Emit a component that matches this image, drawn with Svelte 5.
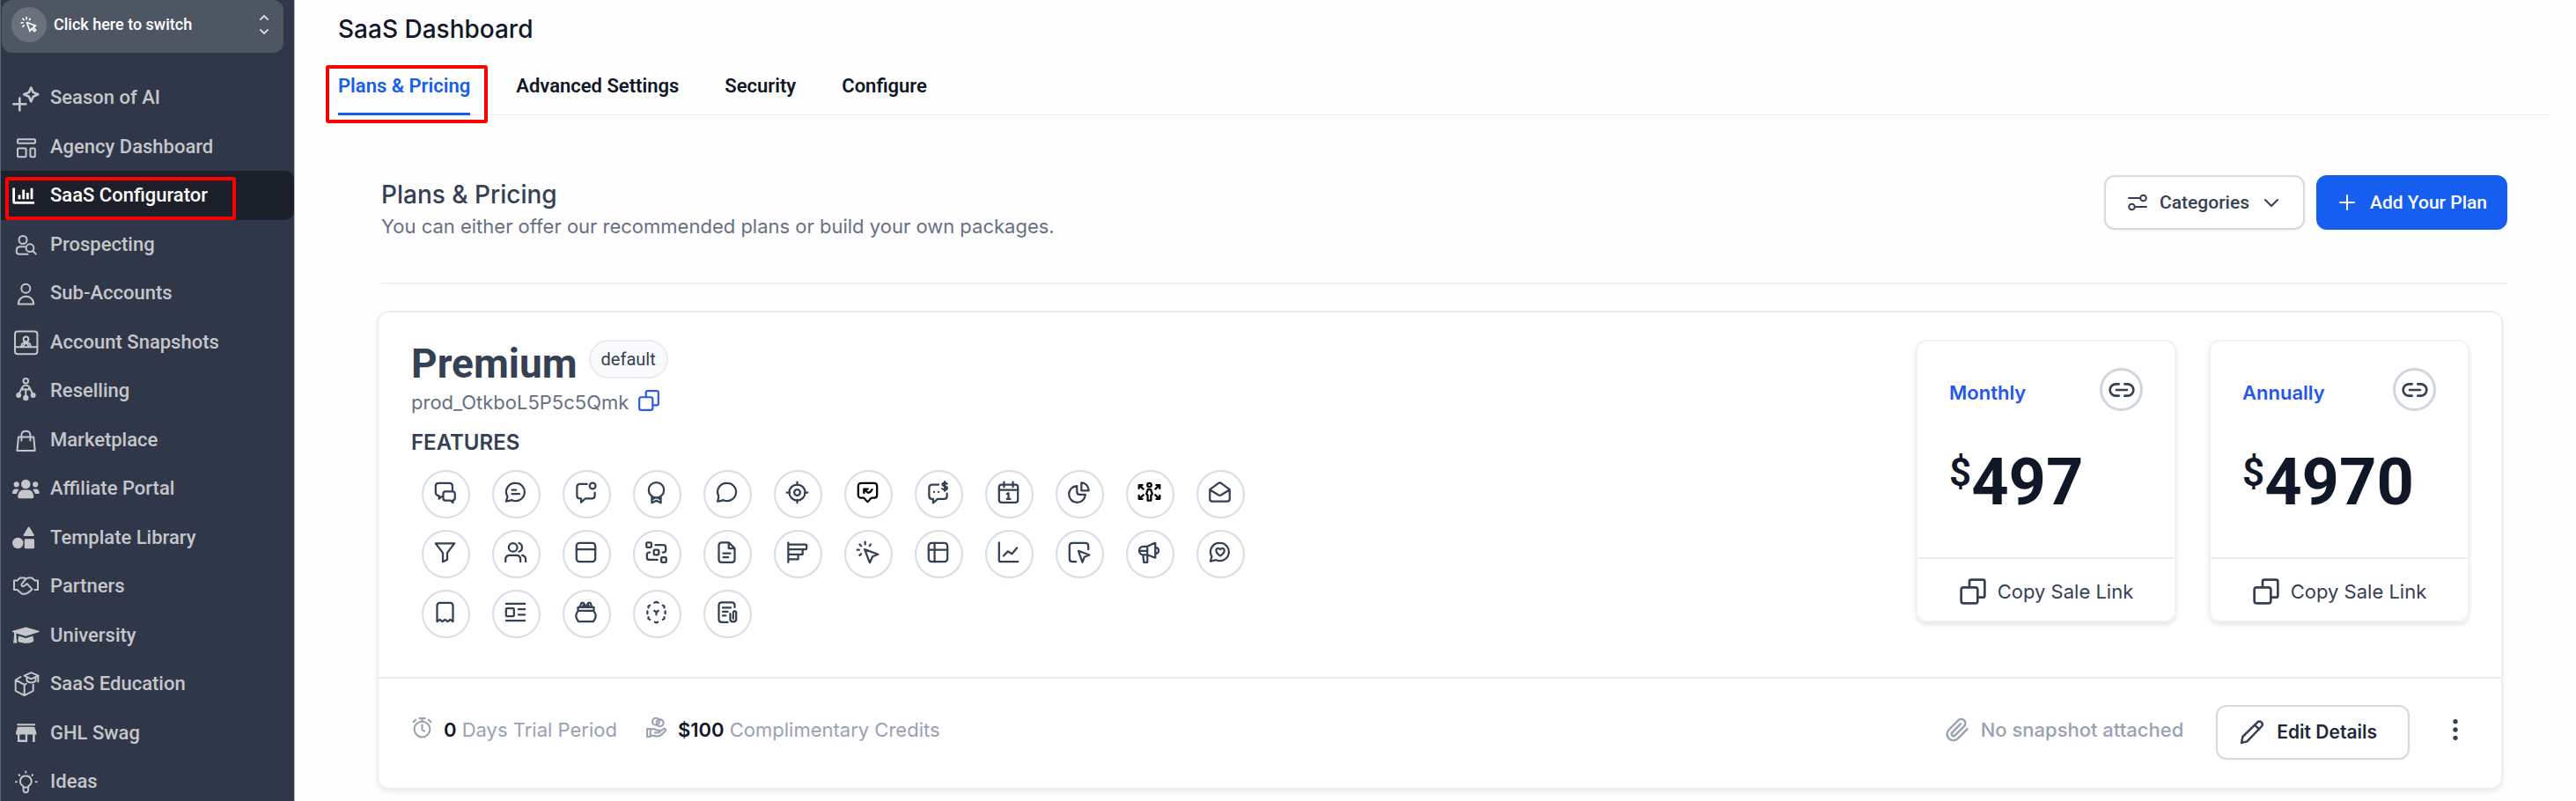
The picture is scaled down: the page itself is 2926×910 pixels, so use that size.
<script lang="ts">
    type NavItem = { label: string; icon: string; active?: boolean };

    const navItems: NavItem[] = [
        { label: 'Season of AI', icon: 'sparkle' },
        { label: 'Agency Dashboard', icon: 'dashboard' },
        { label: 'SaaS Configurator', icon: 'bars', active: true },
        { label: 'Prospecting', icon: 'prospect' },
        { label: 'Sub-Accounts', icon: 'person' },
        { label: 'Account Snapshots', icon: 'snapshot' },
        { label: 'Reselling', icon: 'resell' },
        { label: 'Marketplace', icon: 'bag' },
        { label: 'Affiliate Portal', icon: 'group' },
        { label: 'Template Library', icon: 'shapes' },
        { label: 'Partners', icon: 'handshake' },
        { label: 'University', icon: 'gradcap' },
        { label: 'SaaS Education', icon: 'boxcap' },
        { label: 'GHL Swag', icon: 'store' },
        { label: 'Ideas', icon: 'bulb' }
    ];

    // 32x32 drawings, "solid" marks the filled parts
    const navIcons: Record<string, string> = {
        sparkle: '<path stroke-width="2.6" d="M22.3 4.5l2.4 5.4 5.6 2.4-5.6 2.4-2.4 5.6-2.4-5.6-5.6-2.4 5.6-2.4zM9.3 16.5v14M2.3 23.3h14"/>',
        dashboard: '<rect x="7" y="7.2" width="20" height="4.6" rx="1"/><rect x="7" y="17.5" width="9.6" height="9.8" rx="1"/><rect x="21.4" y="17.5" width="5.4" height="9.8" rx="1"/>',
        bars: '<path stroke-width="2.8" d="M2.6 7.5v16q0 .9.9.9H26M9 15.5v4.7M13.7 9.5v10.7M18.3 13v7.2M23 7.8v12.4" stroke-linecap="butt"/>',
        prospect: '<circle cx="13" cy="10.5" r="4.5"/><path d="M15 18.3H9.5c-2.6.3-4 2.6-3.8 5.2 0 2.2 1 3.2 3.2 3.2h9.6M24.2 23l3.6 3.6"/><circle cx="21" cy="19.7" r="4.4"/>',
        person: '<circle cx="16.3" cy="10.8" r="5"/><path d="M7.8 28.6c0-11.8 17.4-11.8 17.4 0z"/>',
        snapshot: '<rect x="4" y="3.6" width="25.4" height="25.6" rx="3"/><circle cx="16.5" cy="12.4" r="2.8"/><path d="M4 21.2h25.4M11 21c.2-7 10.8-7 11 0M13.5 20l2-3h2l2 3"/>',
        resell: '<circle cx="16.3" cy="4.7" r="2.8"/><path d="M12.5 11.5c2-2.5 5.6-2.5 7.6 0v3h-7.6zM16.3 14v8M12 12.5l-3.5 7M20.6 12.5l3.5 7"/><g class="solid"><circle cx="8.2" cy="21" r="3"/><circle cx="16.3" cy="24" r="3.2"/><circle cx="24.6" cy="21" r="3"/></g>',
        bag: '<path d="M8 12.4h17.2l1.5 15.6H6.5zM11.4 16.5v-6.5c.4-5.6 9.6-5.6 10 0v6.5"/>',
        group: '<g class="solid"><circle cx="16.3" cy="11" r="5.3"/><circle cx="5.7" cy="11.3" r="3.1"/><circle cx="27.2" cy="11.3" r="3.1"/><path d="M7.3 25.5c0-5 2.7-8 6.5-8h5c3.8 0 6.5 3 6.5 8 0 1-.6 1.7-1.6 1.7H8.9c-1 0-1.6-.7-1.6-1.7zM1 20.6c0-2.6 1.5-4.2 4-4.2 1.8 0 3 .5 3.7 1.2-1.5 1.2-2.4 2.6-2.8 4.5H2c-.7 0-1-.5-1-1.5zM31.7 20.6c0-2.6-1.5-4.2-4-4.2-1.8 0-3 .5-3.7 1.2 1.5 1.2 2.4 2.6 2.8 4.5h3.9c.7 0 1-.5 1-1.5z"/></g>',
        shapes: '<g class="solid"><path d="M19.7 3.6c.5 0 .8.3 1 .6l5 8.3c.4.7 0 1.4-.8 1.4H14.5c-.8 0-1.2-.7-.8-1.4l5-8.3c.2-.3.5-.6 1-.6z"/><circle cx="7.3" cy="22" r="6.2"/><rect x="14.8" y="17.2" width="11.2" height="11" rx="1.2"/></g>',
        handshake: '<path d="M3 9.5h3.5l3.3-3h5.5l1.7 1 1.7-1h4.5l3.4 3H30v10.5h-3.5M3 9.5V20h3.5l5.5 4.7h3.5l2.5-.8 2-1.5 2-1.5 1.5-1.5-5.8-6.3-3.3 2.6c-2 1.2-3.7-.7-2.6-2.4l4.7-5.8"/>',
        gradcap: '<g class="solid"><path d="M16.3 6.6l15 4.2c.6.2.6 1 0 1.2l-15 4.8-10.8-3.4v3.6c.6.6.7 1.3.1 1.9l.9 5.6H2l.9-5.6c-.6-.6-.5-1.3.1-1.9v-4.4l-1.7-.6c-.6-.2-.6-1 0-1.2z"/><path d="M8.2 16.5l8.1 2.6 8.1-2.6.9 5.4c-2 3.7-16 3.7-18 0z"/></g>',
        boxcap: '<path d="M10.5 8L4.7 11.5v12.3l10 5.3 10-5.3v-7M4.7 11.5l10 5.3v12.3M14.7 16.8l2-1"/><path d="M14.5 6.7l8-3.5 8 3.5-8 3.6zM17.5 8.5v4.3c2.5 2.3 7.5 2.3 10 0V8.5M30.3 7v6.5"/>',
        store: '<g class="solid"><path d="M6.3 5.2h20.6v2H6.3zM7 8.8h19l2.3 6.5v2.2h-1.6v8.4h-2.6v-8.4h-6v8.4H7v-8.4H5v-2.2zM9.3 17.5v5.9h6.5v-5.9z" fill-rule="evenodd"/></g>',
        bulb: '<path d="M13.3 22.5v-1.4c-6-3.4-3.5-11.6 3-11.6s9 8.2 3 11.6v1.4zM13.6 24v2.4l1.3 1.9h2.8l1.3-1.9V24M16.3 4.6v1M6 16.2H5M27.7 16.2h1M8.5 8.3l.7.7M24.2 8.3l-.7.7"/>'
    };

    // feature icons in display order, 24x24 strokes
    const features: { name: string; body: string; dark?: boolean }[] = [
        { name: 'Two-way conversations', body: '<path d="M10 16H8.5L6 18.5V15.5C3.5 15 2.5 14 2.5 12V5.5c0-2 1-3 3-3h11c2 0 3 1 3 3V10M12.5 11h7c1.5 0 2.5.8 2.5 2.3v4.2c0 1.5-.8 2.2-2 2.3V22.3L17.7 20h-5.2c-1.5 0-2.3-.8-2.3-2.3v-4.4c0-1.5.8-2.3 2.3-2.3z"/>' },
        { name: 'Text messages', body: '<path d="M12.3 2.5a9 9 0 1 1-3.8 17.2L2.5 21l1.5-4.8A9 9 0 0 1 12.3 2.5zM8.5 9.5h4M8.5 13.5h7.5"/>' },
        { name: 'Missed call text back', body: '<path d="M13 3.5H6c-2 0-3 1-3 3v8.5c0 2 1 3 3 3h1.2v4l4.3-4H18c2 0 3-1 3-3v-3"/><circle cx="18.8" cy="5.3" r="3"/>' },
        { name: 'Reputation', body: '<circle cx="12" cy="9.5" r="7.7"/><path d="M7.5 16v6.5l4.5-2.3 4.5 2.3V16M7.5 19l3-1.5M16.5 19l-3-1.5"/>' },
        { name: 'Web chat', body: '<path d="M12.5 2.5a9 9 0 1 1-3.8 17.2c-2 .7-4 1.2-6 1.3.8-2 1.3-3.7 1-5.5A9 9 0 0 1 12.5 2.5z"/>' },
        { name: 'Ads', body: '<circle cx="12" cy="12" r="8"/><circle cx="12" cy="12" r="3"/><path d="M12 1.5v3M12 19.5v3M1.5 12h3M19.5 12h3"/>' },
        { name: 'Chat insights', dark: true, body: '<path d="M5.5 2.5h13c1.8 0 3 1.2 3 3v9c0 1.8-1.2 3-3 3h-2.5c-1 0-1.5 2-4 4-2.5-2-3-4-4-4H5.5c-1.8 0-3-1.2-3-3v-9c0-1.8 1.2-3 3-3z"/><path d="M8.3 12.5V8.5h4M8.3 8.5l3.7 3.5c1.5.8 3.5-1 4.5-3"/>' },
        { name: 'Text to pay', body: '<path d="M12.5 4H6C4 4 3 5 3 7v8.5c0 2 1 3 3 3h1v4l4.5-4H18c2 0 3-1 3-3V13M8 11.5v.1M12.5 11.5v.1M21 3.2c-2-1.5-4.8-.8-4.6 1 .2 2 4.8 1 4.8 3.3 0 2-3.2 2.3-5 .7M18.8 1v9.5"/>' },
        { name: 'Calendar', body: '<rect x="2.5" y="4" width="19" height="18" rx="2.5"/><path d="M2.5 9.5h19M7.5 1.5v5M16.5 1.5v5M10.5 13.5l1.5-.8V18.5M10.3 18.5h3.5"/>' },
        { name: 'Opportunities', body: '<path d="M10 5.5a8.3 8.3 0 1 0 8.5 8.5H13c-2 0-3-1-3-3zM14.5 2c4 .2 7.3 3.5 7.5 8h-7.5z"/>' },
        { name: 'Social planner', dark: true, body: '<circle cx="12" cy="4.5" r="2"/><path d="M10.5 9h3l1.5 4.5-1.3 1.3V20h-3.4v-5.2L9 13.5zM1.5 8V4.5H5M1.8 4.8L6 8.5M22.5 8V4.5H19M22.2 4.8L18 8.5M1.5 15v3.5H5M1.8 18.2L6 14.5M22.5 15v3.5H19M22.2 18.2L18 14.5"/>' },
        { name: 'Email', body: '<path d="M2 9l8.5-6.3c1-.7 2-.7 3 0L22 9v9.5c0 1.8-.8 2.5-2.5 2.5h-15C2.8 21 2 20.3 2 18.5zM2.5 9.5l8 5c1 .7 2 .7 3 0l8-5"/>' },
        { name: 'Funnels', body: '<path d="M2.5 3h19l-7.3 9.5v6.8L9.8 21.5v-9z"/>' },
        { name: 'Memberships', body: '<circle cx="9.5" cy="7" r="4.3"/><path d="M2 21.5v-2.3c0-2.6 1.7-4.2 4.2-4.2h6.6c2.5 0 4.2 1.6 4.2 4.2v2.3M15.5 2.7c4.2 1.3 4.2 7.3 0 8.6M18.8 15c2.2.5 3.5 2 3.5 4.2v2.3"/>' },
        { name: 'Websites', body: '<rect x="2.5" y="2.5" width="19" height="19" rx="3"/><path d="M2.5 9h19"/>' },
        { name: 'Workflows', body: '<rect x="2" y="2" width="5" height="5" rx="1"/><rect x="9.5" y="9.5" width="5" height="5" rx="1"/><rect x="17" y="17" width="5" height="5" rx="1"/><path d="M11 4.5h8c1.5 0 2.5 1 2.5 2.5v2.5c0 1.5-.8 2.3-2 2.5h-1M5.5 12H4.5c-1.3.2-2 1-2 2.5V17c0 1.5 1 2.5 2.5 2.5h8"/>' },
        { name: 'Forms', body: '<path d="M14 2H7C5 2 4 3 4 5v14c0 2 1 3 3 3h10c2 0 3-1 3-3V8zM14 2v6h6M8.5 13h7M8.5 17h5"/>' },
        { name: 'Surveys', body: '<path d="M3 2v20M3 4h17.5c.7 0 1 .3 1 1v3c0 .7-.3 1-1 1H3M17.5 9v5H3M13 14v5H3"/>' },
        { name: 'Trigger links', body: '<path d="M9 9l13.5 5-5.5 2.2-2.8 6.3zM9.5 1.5v2.5M4 4l1.5 1.5M1.5 9.5h2M4 15l1.5-1.5M15 4l-1 1.5"/>' },
        { name: 'Tables', body: '<rect x="2.5" y="2.5" width="19" height="19" rx="3"/><path d="M2.5 9.5h19M8.5 2.5v19"/>' },
        { name: 'Reporting', body: '<path d="M2.5 2v18.5c0 .7.3 1 1 1H21.5M7 15.5l4.5-4.5 4 2.5 5-6"/>' },
        { name: 'Ad manager', body: '<path d="M21.5 9V5.5c0-2-1-3-3-3h-13c-2 0-3 1-3 3v13c0 2 1 3 3 3H9M11.5 10.5l11 4.2-5 2-2 5.3z"/>' },
        { name: 'Campaigns', body: '<path d="M10 6l7.5-3.5h.5v15L10 14.5H6a4 4 0 0 1 0-8.5zM10 6v8.5M2.5 10.5h7M5.5 14.5l1 7.5h3.5v-7.5M18 7c4.5.5 4.5 6 0 6.5"/>' },
        { name: 'GMB messaging', body: '<path d="M12.3 2.5a9 9 0 1 1-3.8 17.2L2.5 21l1.5-4.8A9 9 0 0 1 12.3 2.5zM12.5 15.5c-6-3.8-4.5-8.3-1.5-7.5l1.5 1 1.5-1c3-.8 4.5 3.7-1.5 7.5z"/>' },
        { name: 'Invoices', body: '<path d="M4 21.5V5.5c0-2 1-3 3-3h10c2 0 3 1 3 3v16l-2.7-2-2.6 2-2.7-2-2.7 2-2.6-2z"/>' },
        { name: 'Blogs', body: '<path d="M2.5 3.5h19M15 9h6.5M15 14.5h6.5M2.5 20.5h19"/><rect x="2.5" y="8" width="8" height="8" rx="1"/>' },
        { name: 'Gift cards', body: '<path d="M4.5 10.5h15c1.5 1.5 2.5 3 2.5 5 0 2.5-1 4-2.5 6h-15C3 19.5 2 18 2 15.5c0-2 1-3.5 2.5-5zM4 10V7h16v3M6 6.5l1.5-4h2L12 6.5l2.5-4h2L18 6.5M9 6l1-2M15 6l-1-2"/>' },
        { name: 'Products', body: '<path d="M10 2.5l2-.8 2 .8M4 7.5V6l1.5-1M20 7.5V6l-1.5-1M3 11v2.5M21 11v2.5M4 17v1.5l1.5 1M20 17v1.5l-1.5 1M10.5 22l1.5.6 1.5-.6M12 14.5V12M10 10.5l2 1.5 2-1.5"/>' },
        { name: 'Documents', body: '<path d="M20 7V5c0-2-1-3-3-3H7C5 2 4 3 4 5v14c0 2 1 3 3 3h6M8 7.5h8M8 11.5h5M8 15.5h3M18.5 14v4.5M15.5 13.5V19c0 3.5 6 3.5 6 0v-6.5c0-2-3-2-3 0"/>' }
    ];

    const tabs = ['Plans & Pricing', 'Advanced Settings', 'Security', 'Configure'];
    let activeTab = $state('Plans & Pricing');

    const prices = [
        { period: 'Monthly', amount: 497 },
        { period: 'Annually', amount: 4970 }
    ];
</script>

{#snippet copyIcon(cls: string)}
    <svg class="line {cls}" viewBox="0 0 24 24" aria-hidden="true">
        <path d="M9 8V3.5c0-1 .5-1.500 1.500-1.500h10c1 0 1.500.5 1.500 1.500v12c0 1-.5 1.500-1.500 1.500H17" />
        <rect x="2" y="8.500" width="14" height="13.500" rx="2" />
    </svg>
{/snippet}

<div class="app">
    <aside>
        <button class="switcher">
            <span class="avatar">
                <svg class="line" viewBox="0 0 24 24" aria-hidden="true">
                    <path d="M9 9l12 4.5-3.500 2 3.800 4-1.800 1.800-3.800-4-2.500 3.700zM8.500 2v2.500M3.500 4l1.500 1.500M1.500 9.500h2M3.500 14.500l1.500-1.500M13.500 4l-1 1.500" />
                </svg>
            </span>
            <span class="switch-label">Click here to switch</span>
            <svg class="line updown" viewBox="0 0 12 24" aria-hidden="true">
                <path d="M2 6l4-4 4 4M2 18l4 4 4-4" />
            </svg>
        </button>

        <nav aria-label="Agency">
            <ul>
                {#each navItems as item}
                    <li>
                        <a href="#{item.icon}" class:active={item.active}>
                            <svg class="line" viewBox="0 0 32 32" aria-hidden="true">{@html navIcons[item.icon]}</svg>
                            {item.label}
                        </a>
                        {#if item.active}<span class="marker"></span>{/if}
                    </li>
                {/each}
            </ul>
        </nav>
    </aside>

    <main>
        <h1>SaaS Dashboard</h1>
        <div class="tabs" role="tablist">
            {#each tabs as tab, i}
                <div class="tab">
                    <button role="tab" aria-selected={tab === activeTab} onclick={() => (activeTab = tab)}>{tab}</button>
                    {#if i === 0}<span class="marker"></span>{/if}
                </div>
            {/each}
        </div>

        <header>
            <div>
                <h2>Plans &amp; Pricing</h2>
                <p>You can either offer our recommended plans or build your own packages.</p>
            </div>
            <div class="actions">
                <button class="btn">
                    <svg class="line" viewBox="0 0 24 24" aria-hidden="true">
                        <path d="M2 7h13M9 17h13" />
                        <circle cx="18.5" cy="7" r="3.3" />
                        <circle cx="5.5" cy="17" r="3.3" />
                    </svg>
                    Categories
                    <svg class="line" viewBox="0 0 24 24" aria-hidden="true"><path d="M5 9l7 7 7-7" /></svg>
                </button>
                <button class="btn primary">
                    <svg class="line" viewBox="0 0 24 24" aria-hidden="true"><path d="M12 4v16M4 12h16" /></svg>
                    Add Your Plan
                </button>
            </div>
        </header>

        <section class="plan">
            <div class="plan-body">
                <div class="info">
                    <div class="name">
                        <h3>Premium</h3>
                        <span class="pill">default</span>
                    </div>
                    <div class="product">
                        <span>prod_OtkboL5P5c5Qmk</span>
                        <button class="plain" aria-label="Copy product id">{@render copyIcon('blue')}</button>
                    </div>
                    <h4>FEATURES</h4>
                    <ul class="features">
                        {#each features as feature}
                            <li class:dark={feature.dark} title={feature.name}>
                                <svg class="line" viewBox="0 0 24 24" aria-hidden="true">{@html feature.body}</svg>
                            </li>
                        {/each}
                    </ul>
                </div>

                <div class="prices">
                    {#each prices as price}
                        <div class="price">
                            <div class="price-head">
                                <span>{price.period}</span>
                                <button class="link" aria-label="{price.period} link">
                                    <svg class="line" viewBox="0 0 24 24" aria-hidden="true">
                                        <path d="M9.5 7H7a5 5 0 0 0 0 10h2.5M14.5 7H17a5 5 0 0 1 0 10h-2.5M7.5 12h9" />
                                    </svg>
                                </button>
                            </div>
                            <div class="amount"><span class="currency">$</span>{price.amount}</div>
                            <button class="sale">{@render copyIcon('')}Copy Sale Link</button>
                        </div>
                    {/each}
                </div>
            </div>

            <footer>
                <div class="meta">
                    <svg class="line" viewBox="0 0 24 24" aria-hidden="true">
                        <circle cx="12" cy="14" r="8.5" />
                        <path d="M12 9v5.5l2.5 1.5M12 5V2M9 2h6M2.5 6l2.5-2.5M21.5 6L19 3.5" />
                    </svg>
                    <span><b>0</b> Days Trial Period</span>
                </div>
                <div class="meta">
                    <svg class="line" viewBox="0 0 24 24" aria-hidden="true">
                        <circle cx="11.5" cy="5.5" r="3.8" />
                        <circle cx="16" cy="7" r="3.8" />
                        <path d="M2 13.5h3.5v8.5H2zM5.5 14.5c3-1.5 5-1 6.5.5h2.5c1.8 0 1.8 2.7 0 2.7H10.5M15.5 16.5l4.5-3c1.7-.8 3 1 1.7 2.3L17 20.3c-1.3 1-3 1.4-5 1.2l-6.500-1" />
                    </svg>
                    <span><b>$100</b> Complimentary Credits</span>
                </div>
                <div class="meta snapshot">
                    <svg class="line" viewBox="0 0 24 24" aria-hidden="true">
                        <path d="M21.2 10.9l-9 9a5.8 5.8 0 0 1-8.3-8.3l9-9a3.9 3.9 0 0 1 5.5 5.5l-8.7 8.7a1.900 1.900 0 0 1-2.700-2.700l7.900-8" />
                    </svg>
                    <span>No snapshot attached</span>
                </div>
                <button class="btn edit">
                    <svg class="line" viewBox="0 0 24 24" aria-hidden="true">
                        <path d="M2.5 21.5l1-5.5L17.3 2.5c2.3-1.6 5.3 1.3 3.7 3.7L7.5 20.3zM14.5 5.3l4 4" />
                    </svg>
                    Edit Details
                </button>
                <button class="plain more" aria-label="More actions">
                    <svg viewBox="0 0 24 24" aria-hidden="true">
                        <circle cx="12" cy="4" r="2.3" />
                        <circle cx="12" cy="12" r="2.3" />
                        <circle cx="12" cy="20" r="2.3" />
                    </svg>
                </button>
            </footer>
        </section>
    </main>
</div>

<style>
    :global(body) {
        background: #fefefe;
    }

    .app {
        display: flex;
        height: 100vh;
        overflow: hidden;
        font-family: Inter, sans-serif;
        font-size: 22px;
        line-height: 28px;
        color: #344054;
    }

    button {
        font: inherit;
        color: inherit;
        background: none;
        border: 0;
        padding: 0;
        cursor: pointer;
    }

    ul {
        list-style: none;
        margin: 0;
        padding: 0;
    }

    h1,
    h2,
    h3,
    h4,
    p {
        margin: 0;
    }

    .line {
        fill: none;
        stroke: currentColor;
        stroke-width: 2;
        stroke-linecap: round;
        stroke-linejoin: round;
        flex: none;
    }

    .line :global(.solid) {
        fill: currentColor;
        stroke: none;
    }

    .marker {
        position: absolute;
        box-sizing: border-box;
        border: 4px solid #ff0000;
        border-radius: 3px;
        pointer-events: none;
    }

    /* sidebar */
    aside {
        box-sizing: border-box;
        width: 335px;
        flex: none;
        background: #2f3748;
        border-left: 1px solid #5b6472;
        border-right: 1px solid #b9bdc5;
        font-family: Roboto, sans-serif;
        color: #c5c6ca;
    }

    .switcher {
        display: flex;
        align-items: center;
        gap: 8px;
        width: 320px;
        height: 60px;
        margin: 0 0 23px 1px;
        padding: 0 16px 4px 11px;
        border-radius: 12px;
        background: #4e5664;
        color: #ffffff;
        font-size: 18px;
        font-weight: 500;
        text-align: left;
    }

    .avatar {
        display: flex;
        align-items: center;
        justify-content: center;
        width: 40px;
        height: 40px;
        border-radius: 50%;
        background: #6a717d;
    }

    .avatar svg {
        width: 20px;
        height: 20px;
    }

    .switch-label {
        flex: 1;
    }

    .updown {
        width: 12px;
        height: 24px;
        color: #d3d5d9;
    }

    nav li {
        position: relative;
        height: 56px;
    }

    nav li:nth-child(even) {
        height: 55px;
    }

    nav a {
        box-sizing: border-box;
        display: flex;
        align-items: center;
        gap: 12px;
        height: 100%;
        padding-left: 12px;
        border-radius: 0 10px 10px 0;
        color: inherit;
        font-size: 22px;
        font-weight: 500;
        text-decoration: none;
    }

    nav a.active {
        background: #1c202b;
        color: #ffffff;
    }

    nav svg {
        width: 32px;
        height: 32px;
    }

    nav .marker {
        left: 5px;
        top: 7px;
        bottom: 0;
        width: 262px;
    }

    /* main column */
    main {
        flex: 1;
        min-width: 0;
        padding: 17px 29px 0 49px;
    }

    h1 {
        font-size: 28px;
        line-height: 32px;
        font-weight: 500;
        color: #101828;
    }

    .tabs {
        display: flex;
        gap: 52px;
        margin-top: 32px;
        border-bottom: 1px solid #eaecf5;
    }

    .tab {
        position: relative;
        margin-bottom: -1px;
    }

    .tab button {
        padding-bottom: 13px;
        border-bottom: 3px solid transparent;
        font-family: Roboto, sans-serif;
        line-height: 34px;
        font-weight: 600;
        color: #101828;
    }

    .tab button[aria-selected='true'] {
        color: #155eef;
        border-color: #155eef;
    }

    .tab .marker {
        inset: -7px -20px -9px -14px;
    }

    header {
        display: flex;
        justify-content: space-between;
        align-items: flex-start;
        margin: 67px 49px 0 49px;
        padding-bottom: 50px;
        border-bottom: 2px solid #f0f1f6;
    }

    h2 {
        margin-top: 5px;
        font-size: 28px;
        line-height: 36px;
        font-weight: 500;
    }

    header p {
        margin-top: 4px;
        color: #667085;
    }

    .actions {
        display: flex;
        gap: 13px;
        margin-top: 1px;
    }

    .btn {
        box-sizing: border-box;
        display: flex;
        align-items: center;
        gap: 13px;
        height: 62px;
        padding: 0 24px;
        border: 2px solid #d5d9e2;
        border-radius: 12px;
        background: #ffffff;
        box-shadow: 0 1px 3px rgba(16, 24, 40, 0.06);
        font-size: 21px;
        font-weight: 500;
    }

    .btn svg {
        width: 24px;
        height: 24px;
    }

    .actions .btn {
        font-family: Roboto, sans-serif;
    }

    .btn.primary {
        gap: 14px;
        padding: 0 21px;
        background: #155eef;
        border-color: #155eef;
        color: #ffffff;
    }

    .plan {
        margin: 30px 54px 0 44px;
        border: 2px solid #edeef2;
        border-radius: 14px;
        background: #ffffff;
        box-shadow: 0 3px 5px rgba(16, 24, 40, 0.08);
    }

    .plan-body {
        display: flex;
        justify-content: space-between;
        padding: 31px 36px 44px 37px;
    }

    .name {
        display: flex;
        align-items: flex-start;
        gap: 13px;
        font-family: Roboto, sans-serif;
    }

    h3 {
        padding-top: 3px;
        font-size: 46px;
        line-height: 48px;
        font-weight: 700;
    }

    .pill {
        padding: 6px 12px;
        border: 2px solid #e9eaef;
        border-radius: 22px;
        background: #f9fafb;
        font-size: 20px;
    }

    .product {
        display: flex;
        align-items: center;
        gap: 10px;
        height: 28px;
        margin-top: 6px;
        color: #667085;
    }

    .plain {
        display: flex;
    }

    .blue {
        width: 26px;
        height: 26px;
        margin-bottom: 4px;
        color: #2b5ce6;
    }

    h4 {
        margin-top: 17px;
        font-size: 24px;
        line-height: 30px;
        font-weight: 600;
    }

    .features {
        display: grid;
        grid-template-columns: repeat(12, 55px);
        gap: 13px 25px;
        margin: 16px 0 0 12px;
    }

    .features li {
        box-sizing: border-box;
        display: flex;
        align-items: center;
        justify-content: center;
        height: 55px;
        padding: 0 3px 4px 0;
        border: 2px solid #d8dce4;
        border-radius: 50%;
    }

    .features li.dark {
        color: #000000;
    }

    .features svg {
        width: 27px;
        height: 27px;
    }

    .prices {
        display: flex;
        align-items: flex-start;
        gap: 37px;
    }

    .price {
        box-sizing: border-box;
        width: 296px;
        border: 2px solid #f0f1f4;
        border-radius: 12px;
        box-shadow: 0 3px 5px rgba(16, 24, 40, 0.1);
    }

    .price-head {
        display: flex;
        justify-content: space-between;
        align-items: center;
        padding: 30px 36px 0;
        color: #2456e8;
        font-weight: 600;
    }

    .price-head span {
        padding-top: 6px;
    }

    .link {
        box-sizing: border-box;
        display: flex;
        align-items: center;
        justify-content: center;
        width: 49px;
        height: 49px;
        border: 3px solid #d0d5dd;
        border-radius: 50%;
        color: #344054;
    }

    .link svg {
        width: 32px;
        height: 32px;
    }

    .amount {
        display: flex;
        align-items: flex-start;
        padding: 41px 36px 45px;
        font-family: Roboto, sans-serif;
        font-size: 74px;
        line-height: 80px;
        font-weight: 700;
        color: #101828;
    }

    .currency {
        font-size: 44px;
        line-height: 58px;
        font-weight: 600;
    }

    .sale {
        display: flex;
        align-items: center;
        justify-content: center;
        gap: 12px;
        width: 100%;
        height: 72px;
        padding-top: 4px;
        border-top: 2px solid #edeef3;
    }

    .sale svg {
        width: 32px;
        height: 32px;
    }

    footer {
        display: flex;
        align-items: flex-start;
        padding: 30px 38px 32px 37px;
        border-top: 2px solid #edeef5;
    }

    .meta {
        display: flex;
        align-items: center;
        gap: 12px;
        height: 56px;
        margin-right: 32px;
        color: #98a2b3;
    }

    .meta svg {
        width: 25px;
        height: 25px;
        margin-bottom: 6px;
    }

    .meta b {
        font-weight: 600;
        color: #101828;
    }

    .meta.snapshot {
        margin: 0 37px 0 auto;
        font-weight: 500;
    }

    .meta.snapshot svg {
        width: 29px;
        height: 29px;
        margin: 0;
    }

    .edit {
        padding: 0 35px 0 24px;
        font-weight: 600;
        color: #1d2939;
    }

    .edit svg {
        width: 30px;
        height: 30px;
        color: #344054;
    }

    .more {
        margin: 14px 0 0 38px;
    }

    .more svg {
        width: 28px;
        height: 28px;
        fill: #344054;
    }
</style>
